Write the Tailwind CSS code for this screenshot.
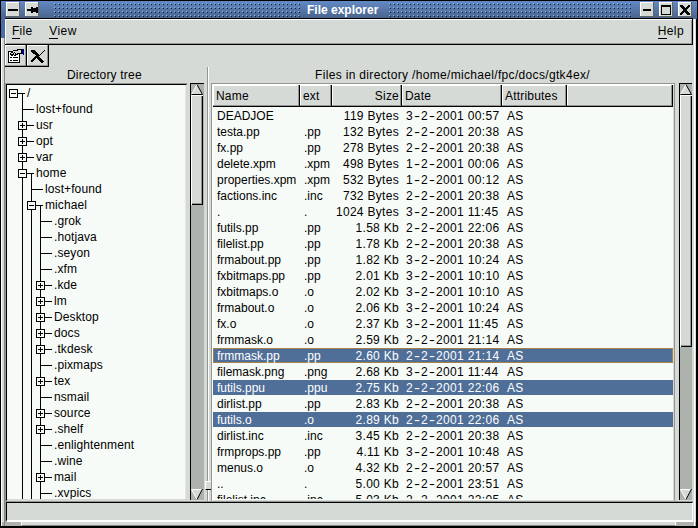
<!DOCTYPE html>
<html lang="en">
<head>
<meta charset="utf-8">
<title>File explorer</title>
<script src="https://cdn.jsdelivr.net/npm/@tailwindcss/browser@4"></script>
</head>
<body class="w-[698px] h-[528px] overflow-hidden bg-black font-['Liberation_Sans',Arial,sans-serif] text-[12px] leading-[16px] text-black">
<div class="relative w-[696px] h-[526px] ml-px mt-0 border-t border-black flex flex-col bg-[#d6dad6] whitespace-nowrap">
  <!-- Window frame strips -->
  <div class="absolute left-0 top-0 w-[4px] h-[37px] bg-[#4a6da5]"></div>
  <div class="absolute right-0 top-0 w-[4px] h-[18px] bg-[#4a6da5]"></div>
  <div class="absolute left-0 top-[37px] w-px h-[488px] bg-white"></div>
  <div class="absolute left-[3px] top-[37px] w-px h-[488px] bg-[#848684]"></div>
  <div class="absolute right-[2px] top-[18px] w-px h-[507px] bg-white"></div>
  <div class="absolute right-0 top-[18px] w-px h-[507px] bg-black"></div>

  <header class="relative h-[17px] shrink-0 flex items-center bg-linear-to-b from-[#638ac6] to-[#4a658c] pl-[5px]">
    <svg class="shrink-0" width="33" height="15" viewBox="0 0 33 15" shape-rendering="crispEdges">
      <g id="btn"><path d="M0 0h14v15H0z" fill="#d6dad6"/><path d="M0 0h14v1H1v14H0z" fill="#fff"/><path d="M14 0v15H0v-1h13V0z" fill="#636563"/></g>
      <path d="M2 7h10v2H2z"/>
      <use href="#btn" x="19"/>
      <path d="M21 7h4v2h-4zM25 5h2v1h3V5h2v6h-2v-1h-3v1h-2z"/>
    </svg>
    <svg class="ml-[15px] shrink-0" width="246" height="17" shape-rendering="crispEdges">
      <defs><pattern id="dots" width="4" height="4" patternUnits="userSpaceOnUse">
        <path d="M0 2h1v1H0z" fill="#8cb2ef"/><path d="M1 3h1v1H1z" fill="#101c31"/></pattern></defs>
      <rect width="246" height="17" fill="url(#dots)"/>
    </svg>
    <h1 class="pl-[7px] w-[89px] shrink-0 text-white font-bold">File explorer</h1>
    <svg class="shrink-0" width="242" height="17" shape-rendering="crispEdges"><rect width="242" height="17" fill="url(#dots)"/></svg>
    <svg class="ml-[9px] shrink-0" width="52" height="15" viewBox="0 0 52 15" shape-rendering="crispEdges">
      <use href="#btn"/><use href="#btn" x="19"/><use href="#btn" x="38"/>
      <path d="M3 7h8v2H3z"/>
      <path d="M21 3h10v10H21zM22 5v7h8V5z" fill-rule="evenodd"/>
      <path d="M40 3h3v1h1v1h1v1h1V5h1V4h1V3h2v2h-1v1h-1v1h-1v2h1v1h1v1h1v2h-3v-1h-1v-1h-1v-1h-1v1h-1v1h-1v1h-2v-2h1v-1h1V9h1V7h-1V6h-1V5h-1z"/>
    </svg>
  </header>

  <div class="relative ml-[4px] w-[688px] h-[504px] flex flex-col">
    <nav class="relative h-[27px] shrink-0 flex items-center border-t border-t-black bg-[#d6dad6] pl-[7px] pr-[9px] shadow-[inset_0_-1px_0_#000,inset_-1px_0_0_#000,inset_0_1px_0_#fff,inset_1px_0_0_#fff,inset_-2px_-2px_0_#949694]">
      <span class="tracking-[0.25px] -mt-[2px]"><span class="border-b border-black">F</span>ile</span>
      <span class="ml-[17px] tracking-[0.4px] -mt-[2px]"><span class="border-b border-black">V</span>iew</span>
      <span class="ml-auto tracking-[0.4px] -mt-[2px]"><span class="border-b border-black">H</span>elp</span>
    </nav>
    <div class="h-[22px] shrink-0 flex">
      <svg width="44" height="22" viewBox="0 0 44 22" shape-rendering="crispEdges">
        <path d="M0 0h43v1H0zM0 0h1v21H0zM22 0h1v21h-1z" fill="#fff"/>
        <path d="M0 20h43v1H0zM20 0h1v21h-1zM42 0h1v21h-1z" fill="#949694"/>
        <path d="M0 21h44v1H0zM21 0h1v21h-1zM43 0h1v21h-1z"/>
        <path d="M3.500 6.500h11v11h-11z" fill="#fff" stroke="#000"/>
        <path d="M5 12h2v1H5zM8 12h5v1H8zM5 15h2v1H5zM8 15h5v1H8z"/>
        <path d="M5.500 8.500l3-3h3l2-1h3v4h-3l-2 1-2 1-1-1-2 1z" fill="#d6dad6" stroke="#000"/>
        <path d="M7 7h1v1H7zM9 7h1v1H9zM8 8h1v1H8zM10 8h1v1h-1z"/>
        <path d="M17 4h2v6h-1V9h-1z" fill="#000084"/>
        <path d="M27 5h3v1h1v1h1v1h1v1h1v1h1V9h1V8h1V7h1V6h1V5h1v1h-1v1h-1v1h-1v1h-1v1h-1v1h-1v1h1v1h1v1h1v1h1v1h1v1h-1v1h-2v-1h-1v-1h-1v-1h-1v-1h-1v-1h-1v1h-1v1h-1v1h-1v1h-2v-2h1v-1h1v-1h1v-1h1v-1h1v-1h-1v-1h-1V9h-1V8h-1V7h-1V6h-1z"/>
      </svg>
    </div>

    <main class="h-[434px] shrink-0 flex">
      <section class="w-[200px] flex flex-col">
        <h2 class="h-[16px] pl-[62px] tracking-[0.2px]">Directory tree</h2>
        <div class="flex h-[418px]">
          <div class="w-[182px] h-[418px] border-t border-l border-[#949694]">
            <div class="w-full h-full border-t border-l border-t-black border-l-black border-b border-b-[#d6dad6] border-r border-r-[#d6dad6]">
              <div id="tree" class="w-[179px] h-[414px] overflow-hidden bg-[#f7fbf7] border-r border-[#e4e8e4]"></div>
            </div>
          </div>
          <div class="ml-[3px] w-[14px] h-[417px] flex flex-col bg-[#adb2ad] border-l border-t border-l-black border-t-black">
            <svg width="12" height="11" viewBox="0 0 12 11"><path d="M.5 10.500L6 .5l5.500 10z" fill="#d6dad6"/><path d="M.5 10.500L6 .5" stroke="#fff"/><path d="M6 .5l5.500 10H.5" fill="none" stroke="#000"/></svg>
            <div class="w-[12px] h-[110px] bg-[#d6dad6] border-l border-t border-white shadow-[inset_-1px_-1px_0_#000,inset_-2px_-2px_0_#949694]"></div>
            <svg class="mt-auto" width="12" height="12" viewBox="0 0 12 12"><path d="M.5 1.500h11L6 11.500z" fill="#d6dad6"/><path d="M11 1.500H.5l5.500 10" fill="none" stroke="#fff"/><path d="M11.500 1L6 11.500" stroke="#000"/></svg>
          </div>
        </div>
      </section>

      <div class="relative w-[6px] flex pl-[2px]">
        <div class="w-px h-[434px] bg-[#949694]"></div><div class="w-px h-[434px] bg-white"></div>
        <div class="absolute left-0 top-[414px] w-[6px] h-[9px] bg-[#d6dad6] border-t border-l border-t-white border-l-white border-b border-b-black"></div>
      </div>

      <section class="w-[482px] flex flex-col">
        <h2 class="h-[16px] pl-[104px] tracking-[0.33px]">Files in directory /home/michael/fpc/docs/gtk4ex/</h2>
        <div class="flex h-[418px]">
          <div class="w-[464px] h-[418px] border-[#949694] border-t border-l border-r flex shadow-[inset_1px_1px_0_#fff] p-px">
            <div class="w-[461px] h-[415px] bg-[#f7fbf7] flex flex-col overflow-hidden">
              <div id="head" class="flex h-[22px] shrink-0"></div>
              <div id="files" class="h-[392px] pt-px overflow-hidden"></div>
            </div>
          </div>
          <div class="ml-[4px] w-[13px] h-[417px] flex flex-col bg-[#adb2ad] border-l border-t border-l-black border-t-black">
            <svg width="12" height="11" viewBox="0 0 12 11"><path d="M.5 10.500L6 .5l5.500 10z" fill="#d6dad6"/><path d="M.5 10.500L6 .5" stroke="#fff"/><path d="M6 .5l5.500 10H.5" fill="none" stroke="#000"/></svg>
            <div class="w-[12px] h-[252px] bg-[#d6dad6] border-l border-t border-white shadow-[inset_-1px_-1px_0_#000,inset_-2px_-2px_0_#949694]"></div>
            <svg class="mt-auto" width="12" height="12" viewBox="0 0 12 12"><path d="M.5 1.500h11L6 11.500z" fill="#d6dad6"/><path d="M11 1.500H.5l5.500 10" fill="none" stroke="#fff"/><path d="M11.500 1L6 11.500" stroke="#000"/></svg>
          </div>
        </div>
      </section>
    </main>

    <footer class="h-[21px] shrink-0 border-t border-l border-[#949694]">
      <div class="h-[20px] border-t border-l border-t-black border-l-black border-b-2 border-b-white border-r border-r-white"></div>
    </footer>
  </div>
  <div class="w-[694px] ml-px h-[4px] bg-[#adb2ad]">
    <div class="ml-[19px] w-[655px] h-[4px] bg-[#d6dad6] border-l border-r border-l-white border-r-white border-b border-b-[#848684]"></div>
  </div>
</div>

<script>
// [label, depth, marker]
const nodes = [["/",0,"-"],["lost+found",1,""],["usr",1,"+"],["opt",1,"+"],["var",1,"+"],["home",1,"-"],
["lost+found",2,""],["michael",2,"-"],[".grok",3,""],[".hotjava",3,""],[".seyon",3,""],[".xfm",3,""],[".kde",3,"+"],
["lm",3,"+"],["Desktop",3,"+"],["docs",3,"+"],[".tkdesk",3,"+"],[".pixmaps",3,""],["tex",3,"+"],["nsmail",3,""],
["source",3,"+"],[".shelf",3,"+"],[".enlightenment",3,""],[".wine",3,""],["mail",3,"+"],[".xvpics",3,""]];
document.getElementById("tree").innerHTML = nodes.map(([label, d, mark]) => {
  const x = 6 + 9 * d;
  let p = "";
  for (let i = 1; i <= d; i++) p += `M${6 + 9 * i} 0h1v16h-1z`;
  p += `M${x} 8h12v1h-12z`;
  if (mark === "-") p += `M${x + 9} 8h1v8h-1z`;
  const box = mark ? `<path d="M${x - 4} 4h9v9h-9z"/><path d="M${x - 3} 5h7v7h-7z" fill="#f7fbf7"/><path d="M${x - 2} 8h5v1h-5z"/>${mark === "+" ? `<path d="M${x} 6h1v5h-1z"/>` : ""}` : "";
  return `<div class="flex h-[16px]"><svg class="shrink-0" width="${x + 14}" height="16" shape-rendering="crispEdges"><path d="${p}"/>${box}</svg><span class="tracking-[0.1px]">${label}</span></div>`;
}).join("");

const cols = [["Name",87,"pl-[3px]"],["ext",32,"pl-[3px]"],["Size",70,"text-right pr-[3px]"],["Date",100,"pl-[3px]"],["Attributes",65,"pl-[3px]"],["",106,""]];
document.getElementById("head").innerHTML = cols.map(([t, w, c]) =>
  `<div style="width:${w}px" class="h-[22px] shrink-0 pt-[3px] bg-[#d6dad6] shadow-[inset_-1px_-1px_0_#000,inset_-2px_-2px_0_#949694,inset_1px_1px_0_#fff] ${c}"><span class="tracking-[0.2px]">${t}</span></div>`).join("");

const files = `DEADJOE||119 Bytes|3-2-2001 00:57
testa.pp|.pp|132 Bytes|2-2-2001 20:38
fx.pp|.pp|278 Bytes|2-2-2001 20:38
delete.xpm|.xpm|498 Bytes|1-2-2001 00:06
properties.xpm|.xpm|532 Bytes|1-2-2001 00:12
factions.inc|.inc|732 Bytes|2-2-2001 20:38
.|.|1024 Bytes|3-2-2001 11:45
futils.pp|.pp|1.58 Kb|2-2-2001 22:06
filelist.pp|.pp|1.78 Kb|2-2-2001 20:38
frmabout.pp|.pp|1.82 Kb|3-2-2001 10:24
fxbitmaps.pp|.pp|2.01 Kb|3-2-2001 10:10
fxbitmaps.o|.o|2.02 Kb|3-2-2001 10:10
frmabout.o|.o|2.06 Kb|3-2-2001 10:24
fx.o|.o|2.37 Kb|3-2-2001 11:45
frmmask.o|.o|2.59 Kb|2-2-2001 21:14
frmmask.pp|.pp|2.60 Kb|2-2-2001 21:14
filemask.png|.png|2.68 Kb|3-2-2001 11:44
futils.ppu|.ppu|2.75 Kb|2-2-2001 22:06
dirlist.pp|.pp|2.83 Kb|2-2-2001 20:38
futils.o|.o|2.89 Kb|2-2-2001 22:06
dirlist.inc|.inc|3.45 Kb|2-2-2001 20:38
frmprops.pp|.pp|4.11 Kb|3-2-2001 10:48
menus.o|.o|4.32 Kb|2-2-2001 20:57
..|.|5.00 Kb|2-2-2001 23:51
filelist.inc|.inc|5.03 Kb|2-2-2001 22:05`.split("\n").map(r => r.split("|"));
const selected = [15, 17, 19];
document.getElementById("files").innerHTML = files.map(([n, e, s, d], i) => {
  const date = d.replace(/-/g, '<span class="inline-block w-[8px] pl-[2px]"><span class="inline-block scale-x-[1.5]">-</span></span>');
  const tone = selected.includes(i) ? "bg-[#4f6f98] text-white" : "";
  const focus = i === 15 ? "shadow-[inset_0_0_0_1px_#a58249]" : "";
  return `<div class="flex h-[15px] mb-px w-[460px] ${tone} ${focus}"><span class="w-[87px] pl-[4px]">${n}</span><span class="w-[32px] pl-[4px]">${e}</span><span class="w-[67px] text-right tracking-[0.3px]">${s}</span><span class="w-[103px] pl-[7px] tracking-[0.33px]">${date}</span><span class="pl-[5px] tracking-[0.3px]">AS</span></div>`;
}).join("");
</script>
</body>
</html>
